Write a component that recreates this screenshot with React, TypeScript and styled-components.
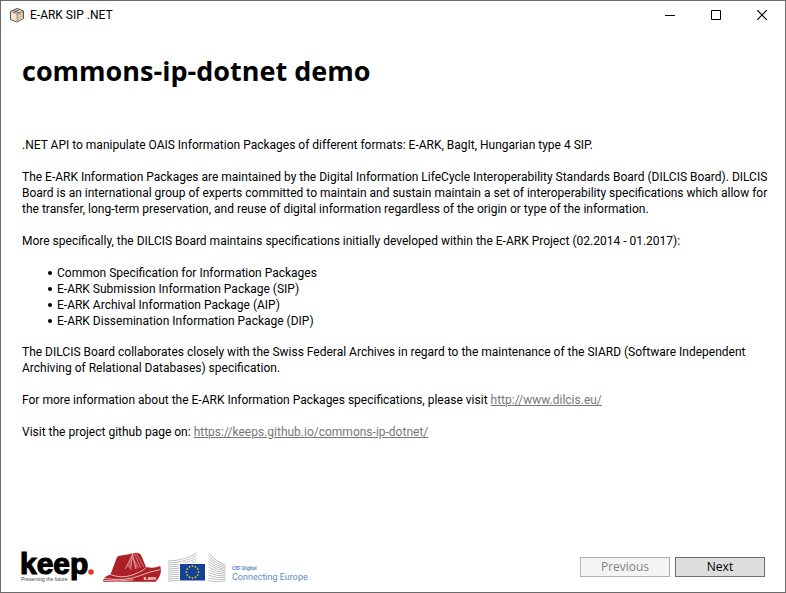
import React from "react";
import styled, { createGlobalStyle } from "styled-components";

const GlobalStyle = createGlobalStyle`
  * { box-sizing: border-box; }
  body {
    margin: 0;
    background: #fff;
    color: #000;
    font: 12px/16px Roboto, "Open Sans", sans-serif;
  }
`;

const Window = styled.div`
  display: flex;
  flex-direction: column;
  min-height: 100vh;
  border: 1px solid #6b696b;
`;

const TitleBar = styled.header`
  display: flex;
  align-items: center;
  height: 28px;
  padding-left: 8px;
`;

const Caption = styled.span`
  flex: 1;
  margin-left: 5px;
`;

const CaptionButton = styled.button`
  display: flex;
  align-items: center;
  justify-content: center;
  width: 46px;
  height: 28px;
  padding: 0;
  border: 0;
  background: none;
`;

const Content = styled.main`
  flex: 1;
  padding: 22px 16px 0 21px;
`;

const Heading = styled.h1`
  margin: 0 0 46px;
  font: 700 27px/40px "Open Sans", "Noto Sans", sans-serif;
`;

const Paragraph = styled.p`
  margin: 0 0 16px;
`;

const Specifications = styled.ul`
  margin: 0 0 15px;
  padding: 0 0 0 26px;
  list-style: none;
`;

const Specification = styled.li`
  display: flex;
  align-items: center;
  gap: 5px;

  &::before {
    content: "";
    width: 4px;
    height: 4px;
    border-radius: 50%;
    background: #000;
  }
`;

const Link = styled.a`
  color: #777;
  text-decoration: underline;
`;

const Footer = styled.footer`
  display: flex;
  align-items: center;
  justify-content: space-between;
  padding: 0 20px 9px 19px;
`;

const Logos = styled.div`
  display: flex;
  align-items: center;
  gap: 7px;
`;

const Actions = styled.div`
  display: flex;
  gap: 5px;
`;

const ActionButton = styled.button`
  width: 90px;
  height: 20px;
  padding: 0;
  border: 1px solid #707070;
  background: #ddd;
  color: #000;
  font: 12px/16px "Open Sans", sans-serif;

  &:disabled {
    border-color: #adb2b5;
    background: #f4f4f4;
    color: #838383;
  }
`;

function PackageIcon() {
  return (
    <svg width="16" height="16" viewBox="0 0 16 16" aria-hidden="true">
      <path d="M1.5 4.5 8 1.5l6.5 2.5v7.5L8 15l-6.5-2.5z" fill="#ead8c3" stroke="#55524f" />
      <path d="M2 5l6 2 6-2.5v7L8 14.5z" fill="#d9c3aa" />
      <path d="M2 5l6 2v7.5l-6-2.5z" fill="#f4e3cf" />
      <path d="M2 4.5l6 2.5 6-2.5M8 7v7.5" fill="none" stroke="#8b7d70" strokeWidth=".8" />
      <path d="M4.5 3.5l6.5 2.5M5 5.5l6-3.5" fill="none" stroke="#655d56" />
    </svg>
  );
}

function KeepLogo() {
  return (
    <svg width="76" height="32" viewBox="0 0 76 32" role="img" aria-label="keep">
      <text x="0" y="23" fontFamily="Liberation Sans" fontWeight="700" fontSize="30" stroke="#000" strokeWidth="1.2">
        keep
      </text>
      <circle cx="71" cy="21" r="2.8" fill="#e8392f" />
      <text x="1" y="30" fontFamily="Liberation Sans" fontSize="5" fill="#444">
        Preserving the future
      </text>
    </svg>
  );
}

function EarkLogo() {
  return (
    <svg width="58" height="30" viewBox="9 9 174 90" role="img" aria-label="E-ARK">
      <path
        d="M10 98 Q9 88 17 83 L32 75 L50 27 Q52 21 58 20 L78 17 L108 11 Q120 11 124 20 L138 54 Q160 60 181 51 L183 66 Q181 84 167 98 Z"
        fill="#ad2026"
      />
      <path d="M96 17 79 52 L92 60 L97 28 L105 60 L117 55 Z" fill="#c9565c" />
      <path
        d="M76 60 98 15 M98 15 L92 62 M98 15 L108 61 M103 13 L122 56 M109 13 L131 54"
        fill="none"
        stroke="#f0cccc"
        strokeWidth="1.6"
      />
      <path
        d="M28 76 Q66 90 100 77 T138 55 M12 88 Q74 98 120 80 Q150 67 181 62 M12 94 Q60 99 100 92"
        fill="none"
        stroke="#fff"
        strokeWidth="2"
      />
      <text x="131" y="93" fontFamily="Liberation Sans" fontWeight="700" fontSize="12" fill="#fff">
        E-ARK
      </text>
    </svg>
  );
}

const stripes = [0, 1, 2, 3, 4, 5, 6, 7, 8, 9, 10];
const stars = [0, 1, 2, 3, 4, 5, 6, 7, 8, 9, 10, 11];

function CefLogo() {
  return (
    <svg width="140" height="30" viewBox="0 0 140 30" role="img" aria-label="CEF Digital Connecting Europe">
      <g fill="none" stroke="#b8b8b8" strokeWidth=".9">
        {stripes.map((i) => (
          <path key={"l" + i} d={`M0 ${9 + i * 2} Q20 ${8 + i * 2} 28.5 ${0.5 + i * 2.8}`} />
        ))}
        {stripes.map((i) => (
          <path key={"r" + i} d={`M40.5 ${1 + i * 2.8} Q48 ${10 + i * 2} 57.5 ${13 + i * 1.6}`} />
        ))}
      </g>
      <path d="M11.5 11.5h26V29h-26z" fill="#164193" stroke="#fff" />
      {stars.map((i) => (
        <circle
          key={i}
          cx={24.5 + 6 * Math.sin((i * Math.PI) / 6)}
          cy={20 - 6 * Math.cos((i * Math.PI) / 6)}
          r=".85"
          fill="#f3dc2b"
        />
      ))}
      <g fontFamily="Roboto" fill="#5d8ac2">
        <text x="64" y="18" fontSize="5" fontWeight="700">
          CEF Digital
        </text>
        <text x="64" y="28" fontSize="9">
          Connecting Europe
        </text>
      </g>
    </svg>
  );
}

export default function App() {
  return (
    <Window>
      <GlobalStyle />
      <TitleBar>
        <PackageIcon />
        <Caption>E-ARK SIP .NET</Caption>
        <CaptionButton type="button" aria-label="Minimize">
          <svg width="10" height="10" stroke="#000"><path d="M0 5.5h10" /></svg>
        </CaptionButton>
        <CaptionButton type="button" aria-label="Maximize">
          <svg width="10" height="10" stroke="#000" fill="none"><path d="M.5.5h9v9h-9z" /></svg>
        </CaptionButton>
        <CaptionButton type="button" aria-label="Close">
          <svg width="10" height="10" stroke="#000" strokeWidth="1.2"><path d="M0 0l10 10M10 0L0 10" /></svg>
        </CaptionButton>
      </TitleBar>
      <Content>
        <Heading>commons-ip-dotnet demo</Heading>
        <Paragraph>
          .NET API to manipulate OAIS Information Packages of different formats: E-ARK, BagIt, Hungarian type 4 SIP.
        </Paragraph>
        <Paragraph>
          The E-ARK Information Packages are maintained by the Digital Information LifeCycle Interoperability Standards
          Board (DILCIS Board). DILCIS Board is an international group of experts committed to maintain and sustain
          maintain a set of interoperability specifications which allow for the transfer, long-term preservation, and
          reuse of digital information regardless of the origin or type of the information.
        </Paragraph>
        <Paragraph>
          More specifically, the DILCIS Board maintains specifications initially developed within the E-ARK Project
          (02.2014 - 01.2017):
        </Paragraph>
        <Specifications>
          <Specification>Common Specification for Information Packages</Specification>
          <Specification>E-ARK Submission Information Package (SIP)</Specification>
          <Specification>E-ARK Archival Information Package (AIP)</Specification>
          <Specification>E-ARK Dissemination Information Package (DIP)</Specification>
        </Specifications>
        <Paragraph>
          The DILCIS Board collaborates closely with the Swiss Federal Archives in regard to the maintenance of the
          SIARD (Software Independent Archiving of Relational Databases) specification.
        </Paragraph>
        <Paragraph>
          For more information about the E-ARK Information Packages specifications, please visit{" "}
          <Link href="http://www.dilcis.eu/">http://www.dilcis.eu/</Link>
        </Paragraph>
        <Paragraph>
          Visit the project github page on:{" "}
          <Link href="https://keeps.github.io/commons-ip-dotnet/">https://keeps.github.io/commons-ip-dotnet/</Link>
        </Paragraph>
      </Content>
      <Footer>
        <Logos>
          <KeepLogo />
          <EarkLogo />
          <CefLogo />
        </Logos>
        <Actions>
          <ActionButton type="button" disabled>Previous</ActionButton>
          <ActionButton type="button">Next</ActionButton>
        </Actions>
      </Footer>
    </Window>
  );
}
